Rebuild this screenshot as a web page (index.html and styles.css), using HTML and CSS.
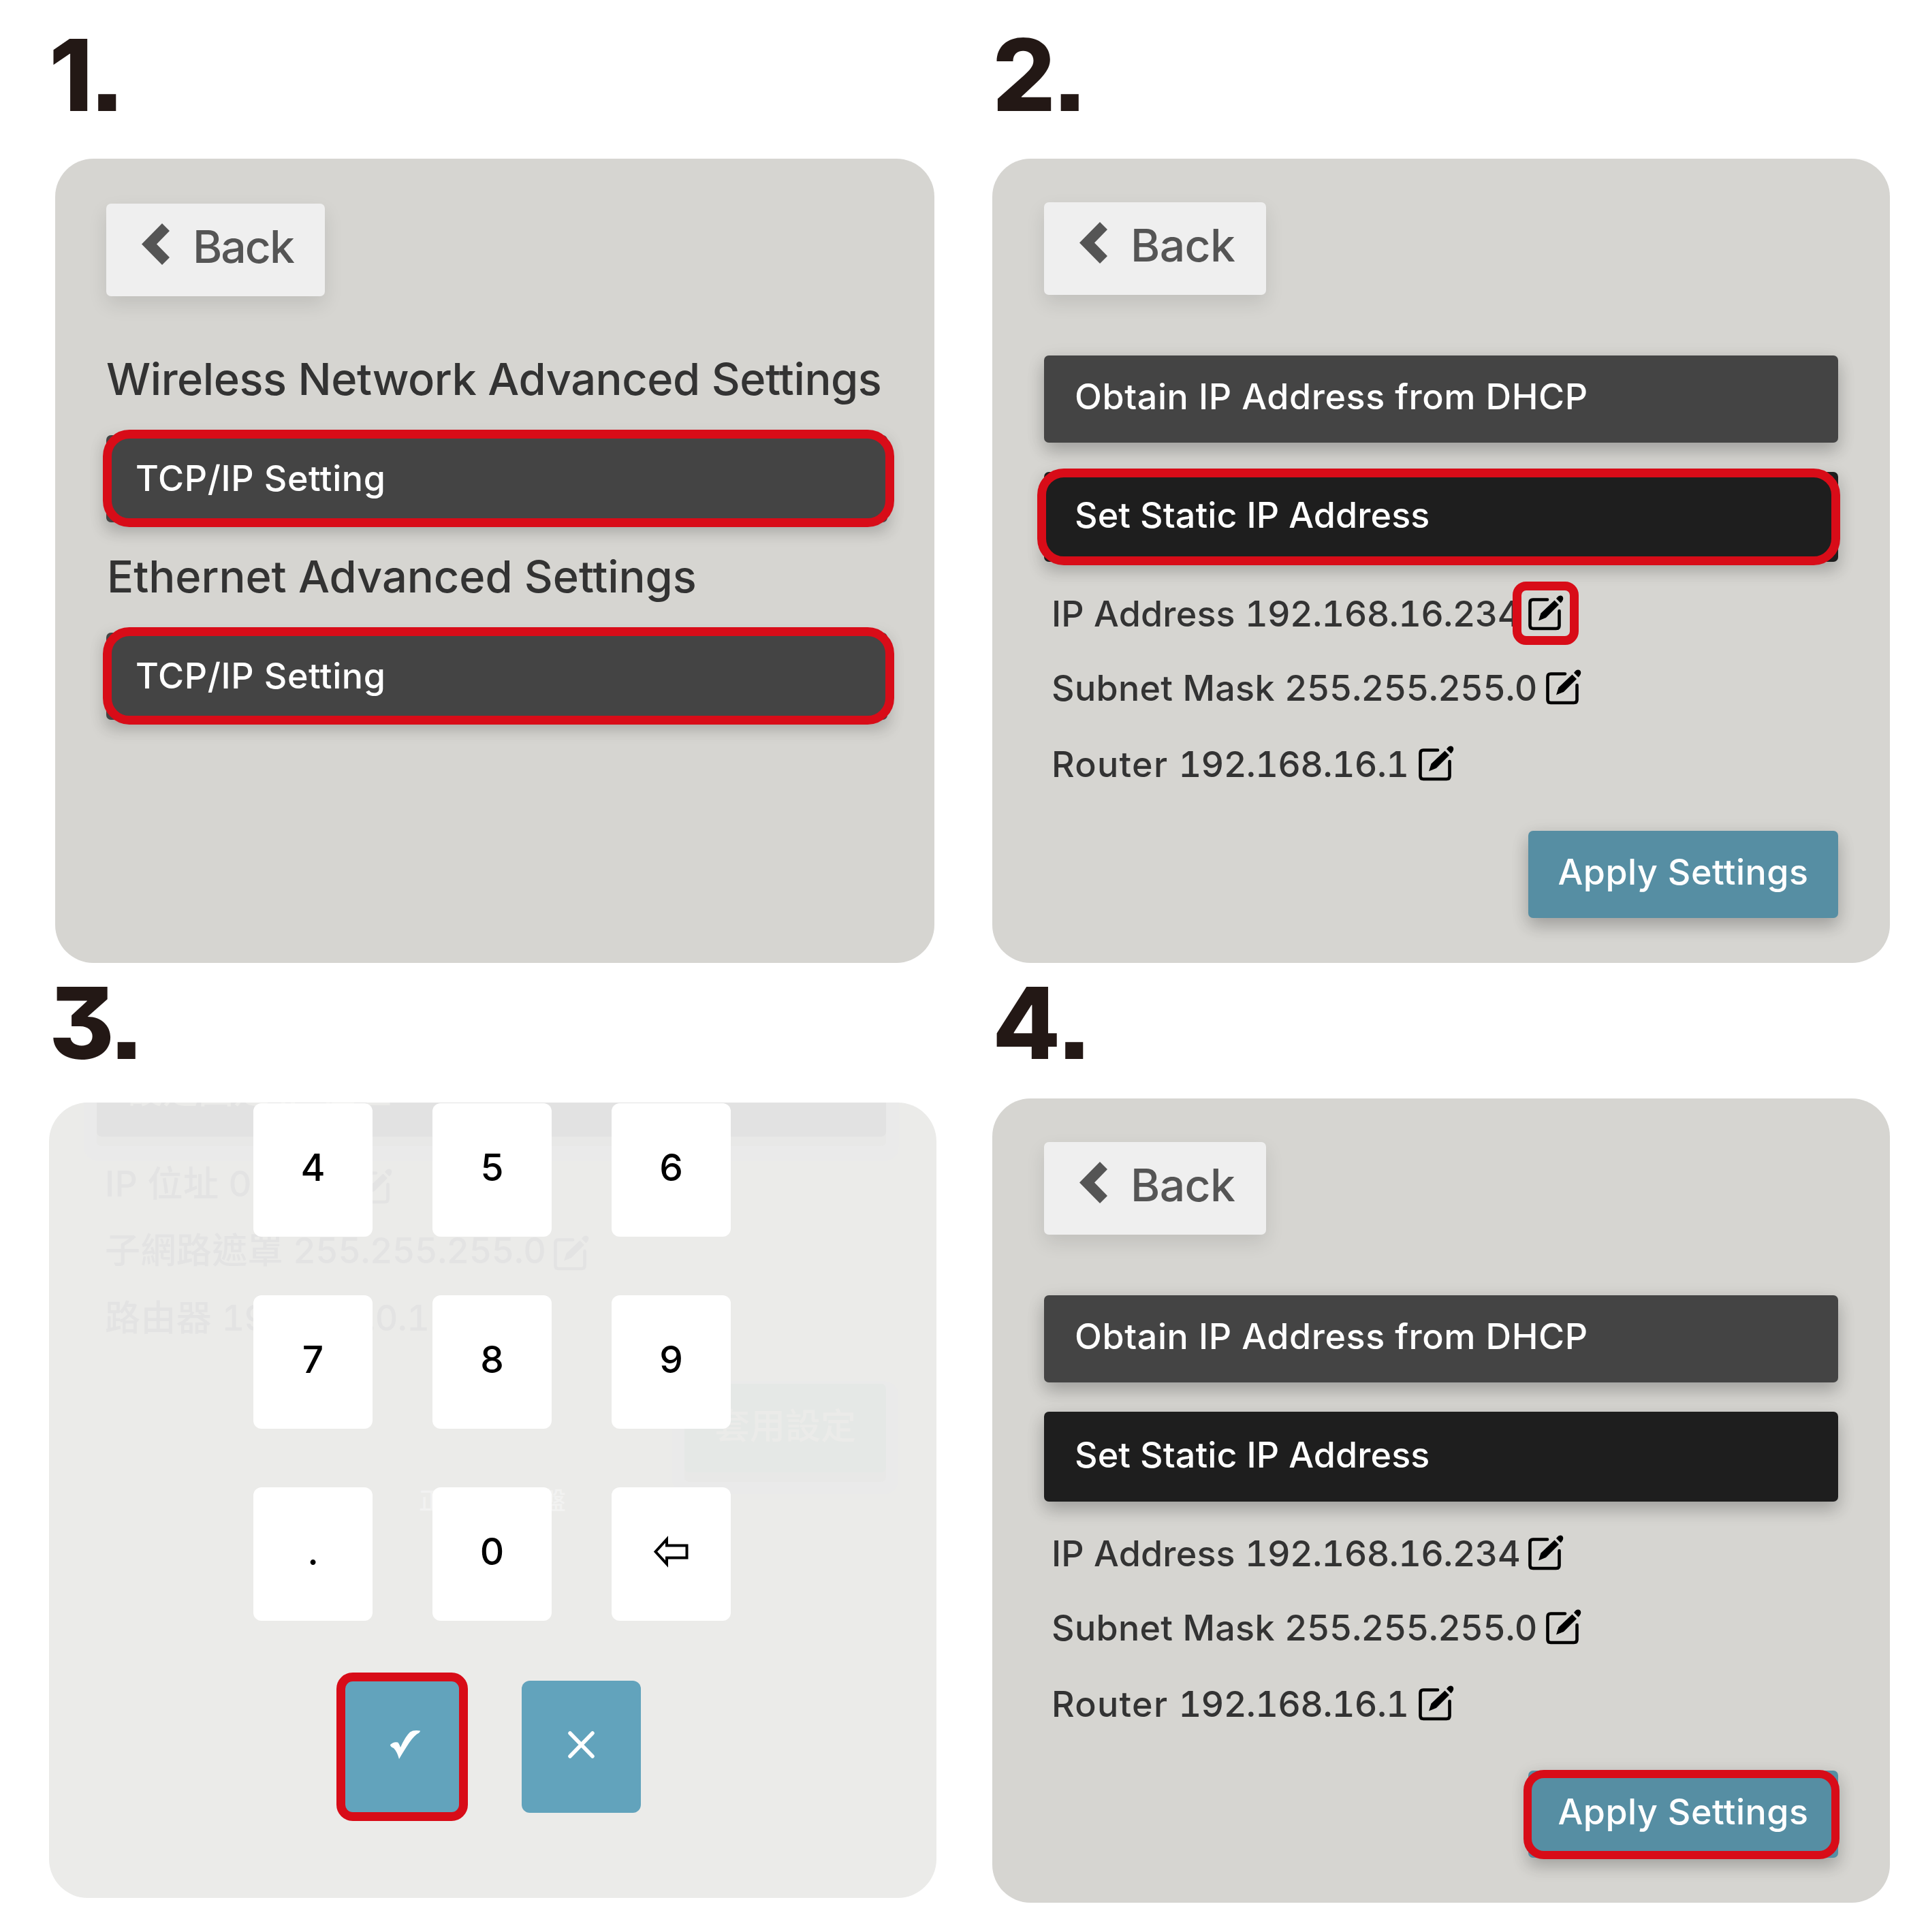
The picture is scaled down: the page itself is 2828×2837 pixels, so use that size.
FILE: index.html
```html
<!DOCTYPE html>
<html lang="en">
<head>
  <meta charset="UTF-8" />
  <meta name="viewport" content="width=device-width, initial-scale=1.0"/>
  <title>Static IP Setup Guide</title>
  <link rel="stylesheet" href="styles.css">
</head>

<body>
  <!-- shared icons -->
  <svg class="icon-defs" aria-hidden="true">
    <symbol id="icon-back" viewBox="0 0 41 61">
      <path d="M0 30.5 L30 0 L41 11 L22 30.5 L41 50 L30 61 Z" />
    </symbol>
    <symbol id="icon-edit" viewBox="0 0 52 53">
      <path d="M28 6.5 H7 Q2.5 6.5 2.5 11 V44.5 Q2.5 49 7 49 H41 Q45.5 49 45.5 44.5 V23" fill="none" stroke="currentColor" stroke-width="4.6" stroke-linecap="round" />
      <path d="M38.5 7.5 L45 14 L26 33 L15 37.5 L18.5 26.5 Z" />
      <path d="M41 5 Q45.500 -1.500 50 1.500 Q53.500 5.500 47.500 11.500 Z" />
    </symbol>
  </svg>

  <main class="steps">
    <section class="step">
      <h2 class="step-number">1.</h2>
      <div class="panel panel-list">
        <button class="btn btn-back"><svg class="icon-back"><use href="#icon-back" /></svg><span>Back</span></button>
        <h3 class="section-title">Wireless Network Advanced Settings</h3>
        <button class="btn btn-dark marked">TCP/IP Setting</button>
        <h3 class="section-title section-title-next">Ethernet Advanced Settings</h3>
        <button class="btn btn-dark marked">TCP/IP Setting</button>
      </div>
    </section>

    <section class="step">
      <h2 class="step-number">2.</h2>
      <div class="panel panel-form">
        <button class="btn btn-back"><svg class="icon-back"><use href="#icon-back" /></svg><span>Back</span></button>
        <button class="btn btn-dark btn-dhcp">Obtain IP Address from DHCP</button>
        <button class="btn btn-dark btn-static marked">Set Static IP Address</button>
        <div class="fields">
          <div class="field field-ip"><span class="field-text">IP Address <span class="value">192.168.16.234</span></span><span class="edit marked"><svg class="icon-edit"><use href="#icon-edit" /></svg></span></div>
          <div class="field field-mask"><span class="field-text">Subnet Mask <span class="value">255.255.255.0</span></span><span class="edit"><svg class="icon-edit"><use href="#icon-edit" /></svg></span></div>
          <div class="field field-router"><span class="field-text">Router <span class="value">192.168.16.1</span></span><span class="edit"><svg class="icon-edit"><use href="#icon-edit" /></svg></span></div>
        </div>
        <button class="btn btn-apply">Apply Settings</button>
      </div>
    </section>

    <section class="step step-lower">
      <h2 class="step-number">3.</h2>
      <div class="panel panel-keypad">
        <!-- faded settings page behind the keypad -->
        <div class="backdrop" lang="zh-Hant">
          <div class="backdrop-bar">設定固定 IP 位址</div>
          <div class="backdrop-row row-ip"><span>IP 位址 0.0.0.0</span><svg class="icon-edit"><use href="#icon-edit" /></svg></div>
          <div class="backdrop-row row-mask"><span>子網路遮罩 <span class="value">255.255.255.0</span></span><svg class="icon-edit"><use href="#icon-edit" /></svg></div>
          <div class="backdrop-row row-router"><span>路由器 <span class="value">192.168.0.1</span></span></div>
          <div class="backdrop-apply">套用設定</div>
          <div class="backdrop-loading">正在載入鍵盤</div>
        </div>
        <div class="keypad">
          <button class="key">4</button>
          <button class="key">5</button>
          <button class="key">6</button>
          <button class="key">7</button>
          <button class="key">8</button>
          <button class="key">9</button>
          <button class="key">.</button>
          <button class="key">0</button>
          <button class="key key-delete">
            <svg class="icon-delete" viewBox="0 0 51 45"><path d="M2.500 22.500 L19 4.500 V13.500 H48.500 V31.500 H19 V40.500 Z" /></svg>
          </button>
        </div>
        <div class="keypad-actions">
          <button class="key key-action marked">
            <svg class="icon-check" viewBox="0 0 44 42"><path d="M0 21 Q5 16 11 17.500 Q13 19 15 25 Q22 9 29 2.500 Q34 -1 44 0.500 Q44 3 39 5.500 Q32 11 24 24 Q17 35 13 42 Q10 31 5 26 Q0 24 0 21 Z" /></svg>
          </button>
          <button class="key key-action">
            <svg class="icon-close" viewBox="0 0 39 40"><path d="M3 3 L36 37 M36 3 L3 37" /></svg>
          </button>
        </div>
      </div>
    </section>

    <section class="step step-lower">
      <h2 class="step-number step-number-last">4.</h2>
      <div class="panel panel-form">
        <button class="btn btn-back"><svg class="icon-back"><use href="#icon-back" /></svg><span>Back</span></button>
        <button class="btn btn-dark btn-dhcp">Obtain IP Address from DHCP</button>
        <button class="btn btn-dark btn-static">Set Static IP Address</button>
        <div class="fields">
          <div class="field field-ip"><span class="field-text">IP Address <span class="value">192.168.16.234</span></span><span class="edit"><svg class="icon-edit"><use href="#icon-edit" /></svg></span></div>
          <div class="field field-mask"><span class="field-text">Subnet Mask <span class="value">255.255.255.0</span></span><span class="edit"><svg class="icon-edit"><use href="#icon-edit" /></svg></span></div>
          <div class="field field-router"><span class="field-text">Router <span class="value">192.168.16.1</span></span><span class="edit"><svg class="icon-edit"><use href="#icon-edit" /></svg></span></div>
        </div>
        <button class="btn btn-apply marked">Apply Settings</button>
      </div>
    </section>
  </main>
</body>
</html>
```
FILE: styles.css
```css
* { box-sizing: border-box; margin: 0; padding: 0; }
body {
  font-family: Inter, "Noto Sans CJK TC", sans-serif;
  background: #fff; color: #333;
}
svg { display: block; fill: currentColor; overflow: visible; }
.icon-defs { position: absolute; width: 0; height: 0; }

.steps {
  display: grid; grid-template-columns: 1303px 1318px;
  column-gap: 82px; padding-left: 72px;
  grid-template-rows: 1414px 1423px;
}
.step { display: flex; flex-direction: column; align-items: flex-start; padding-top: 37px; }
.step-lower { padding-top: 15px; }
.step-number {
  font-size: 146px; line-height: 146px; font-weight: 800; color: #231815;
  font-feature-settings: "cv09", "ss07";
  letter-spacing: -5px; margin-bottom: 50px;
}
.step-lower .step-number { margin-bottom: 38px; }
.step-number-last { letter-spacing: -1px; }

.panel {
  display: flex; flex-direction: column; align-items: flex-start;
  background: #d6d5d1; border-radius: 56px; position: relative;
}
.panel-list { width: 1291px; height: 1181px; margin-left: 9px; padding: 66px 69px 0 75px; }
.panel-form { width: 1318px; height: 1181px; padding: 64px 76px 0; }

/* buttons */
.btn {
  font-family: inherit; border: none; border-radius: 7px; color: #fff;
  font-size: 52px; line-height: 60px; font-weight: 550; text-align: left;
  box-shadow: 0 12px 24px rgba(0,0,0,0.2), 0 6px 30px rgba(0,0,0,0.08);
}
.btn-back {
  display: flex; align-items: center; background: #efefef; color: #555;
  width: 321px; height: 136px; padding: 0 0 10px 52px;
  font-size: 66px; font-weight: 450; letter-spacing: -2px; gap: 34px;
  box-shadow: 0 12px 28px rgba(0,0,0,0.1);
}
.panel-form .btn-back { width: 326px; letter-spacing: -0.6px; }
.icon-back { width: 41px; height: 61px; margin-top: -7px; }
.btn-dark {
  background: #444; width: 100%; height: 128px; padding: 0 45px;
  letter-spacing: 0.6px;
}
.panel-list .btn-dark { padding-left: 43px; }
.btn-dhcp { margin-top: 89px; padding-bottom: 6px; }
.btn-static { background: #1e1e1e; height: 132px; margin-top: 43px; padding-bottom: 4px; letter-spacing: 0.1px; }
.btn-apply {
  background: #568ea3; width: 455px; height: 128px; text-align: center;
  align-self: flex-end; margin-top: 67px; padding-bottom: 6px; letter-spacing: 0.5px;
}
.section-title {
  font-size: 65px; line-height: 80px; font-weight: 450;
  margin: 82px 0 42px; white-space: nowrap; letter-spacing: -0.45px;
}
.section-title-next { margin: 40px 0 42px; letter-spacing: -0.05px; padding-left: 1px; }

/* address rows */
.fields { padding: 47px 0 0 11px; font-size: 52px; line-height: 60px; font-weight: 450; }
.field { display: flex; align-items: flex-start; height: 60px; margin-bottom: 49px; white-space: nowrap; }
.field-text { width: 700px; letter-spacing: 0.2px; }
.value { font-variant-numeric: tabular-nums; letter-spacing: -0.6px; }
.field-mask { margin-bottom: 52px; }
.field-mask .field-text { width: 726px; letter-spacing: 0.3px; }
.field-router { margin-bottom: 0; }
.field-router .field-text { width: 539px; letter-spacing: 1.3px; }
.edit { margin-top: 2px; color: #000; }
.icon-edit { width: 52px; height: 53px; }

/* red highlight ring */
.marked { position: relative; }
.marked::after {
  content: ""; position: absolute; inset: -8px -10px -7px -5px;
  border: 13px solid #d80c18; border-radius: 39px;
}
.btn-static.marked::after { inset: -5px -3px -5px -10px; }
.edit.marked::after { inset: -20px -22px -20px -23px; border-radius: 20px; }
.btn-apply.marked::after { inset: -1px -2px -2px -7px; border-radius: 30px; border-width: 12px; }
.key-action.marked::after { inset: -12px -9px; border-radius: 24px; }

/* keypad */
.panel-keypad { width: 1303px; height: 1168px; margin-top: 6px; overflow: hidden; background: #ebebe9; border-radius: 57px; }
.keypad {
  position: relative; display: grid; grid-template-columns: repeat(3, 175px);
  column-gap: 88px; row-gap: 86px; margin: 1px 0 0 300px;
}
.key {
  font-family: inherit; font-size: 55px; line-height: 60px; font-weight: 550; color: #000;
  display: flex; justify-content: center; align-items: center;
  height: 196px; border: none; border-radius: 12px; background: #fff;
  padding-bottom: 8px;
}
.keypad-actions { position: relative; display: flex; gap: 88px; margin: 88px 0 0 431px; }
.key-action { width: 175px; height: 194px; background: #62a3bc; padding-bottom: 6px; }
.key-action.marked { padding-left: 8px; }
.icon-delete { width: 51px; height: 45px; fill: none; stroke: #000; stroke-width: 4; }
.icon-check { width: 44px; height: 42px; fill: #fff; }
.icon-close { width: 39px; height: 40px; fill: none; stroke: #fff; stroke-width: 5.5; stroke-linecap: round; }

/* starts above the panel, the top of the bar is scrolled out of view */
.backdrop {
  position: absolute; inset: -78px 0 0; color: #e3e3e3;
  font-size: 52px; line-height: 60px; font-weight: 450;
}
.backdrop-bar {
  width: 1159px; height: 128px; margin-left: 70px; padding-left: 45px;
  background: #e2e2e2; color: #ebebe9; border-radius: 7px;
  line-height: 122px; font-weight: 500;
  box-shadow: 0 14px 0 #e8e8e7, 0 17px 0 19px #eaeaea;
}
.backdrop-row { display: flex; height: 60px; margin-left: 82px; white-space: nowrap; letter-spacing: 0.4px; }
.backdrop-row .icon-edit { margin-top: 7px; }
.row-ip { margin-top: 40px; }
.row-ip > span { width: 370px; }
.row-mask { margin-top: 38px; }
.row-mask > span { width: 659px; }
.row-router { margin-top: 39px; }
.backdrop-apply {
  width: 296px; height: 130px; margin: 66px 0 0 933px; text-align: center;
  line-height: 126px; background: #e5e8e6; color: #ebebe9; border-radius: 7px; font-weight: 500;
  box-shadow: 0 14px 0 #e8e8e7, 0 14px 0 18px #eaeaea;
}
.backdrop-loading { margin-top: 12px; font-size: 36px; line-height: 60px; padding-left: 543px; color: #f2f2f1; }
```
